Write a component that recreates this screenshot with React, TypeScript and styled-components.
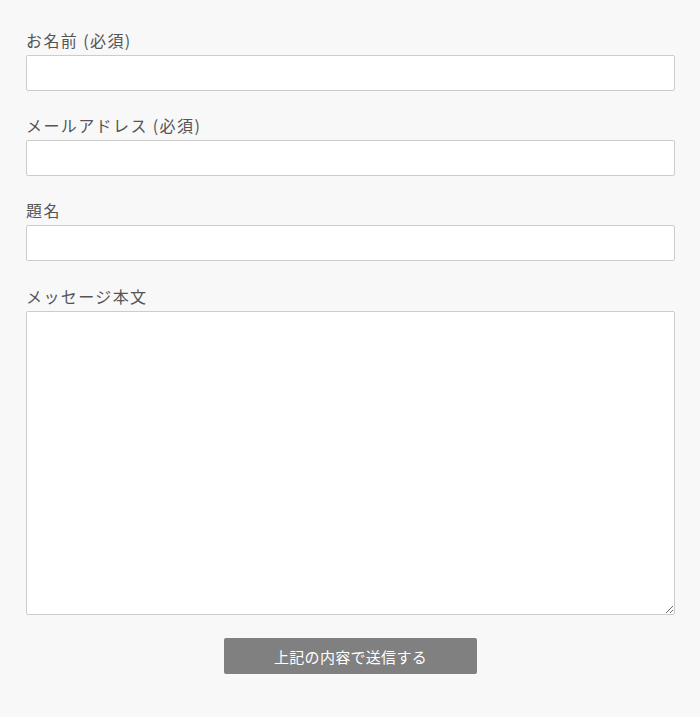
import styled, { createGlobalStyle } from "styled-components";

const GlobalStyle = createGlobalStyle`
  html, body {
    margin: 0;
    padding: 0;
    background: #f8f8f8;
  }
  body {
    font-family: "Noto Sans CJK JP", "Noto Sans", sans-serif;
    color: #555;
  }
`;

function App() {
  return (
    <>
      <GlobalStyle />
      <Form onSubmit={(e) => e.preventDefault()}>
        <Field>
          <Label htmlFor="name">お名前 (必須)</Label>
          <Input id="name" type="text" />
        </Field>
        <Field>
          <Label htmlFor="email">メールアドレス (必須)</Label>
          <Input id="email" type="email" />
        </Field>
        <Field>
          <Label htmlFor="subject">題名</Label>
          <Input id="subject" type="text" />
        </Field>
        <Field $gap={23}>
          <Label htmlFor="message">メッセージ本文</Label>
          <TextArea id="message" />
        </Field>
        <Actions>
          <Submit type="submit">上記の内容で送信する</Submit>
        </Actions>
      </Form>
    </>
  );
}

const Form = styled.form`
  padding: 28px 25px 40px 26px;
  display: flex;
  flex-direction: column;
`;

const Field = styled.div<{ $gap?: number }>`
  display: flex;
  flex-direction: column;
  margin-bottom: 22px;
  margin-top: ${(p) => (p.$gap ? p.$gap - 22 : 0)}px;
`;

const Label = styled.label`
  display: block;
  height: 24px;
  font-size: 16px;
  line-height: 24px;
  letter-spacing: 1.4px;
  margin-bottom: 3px;
  color: #555;
  white-space: nowrap;
`;

const Input = styled.input`
  box-sizing: border-box;
  width: 100%;
  height: 36px;
  border: 1px solid #ccc;
  border-radius: 2px;
  background: #fff;
  padding: 0 8px;
  font: inherit;
  outline: none;
`;

const TextArea = styled.textarea`
  box-sizing: border-box;
  width: 100%;
  height: 304px;
  border: 1px solid #ccc;
  border-radius: 2px;
  background: #fff;
  padding: 8px;
  font: inherit;
  display: block;
  outline: none;
`;

const Actions = styled.div`
  display: flex;
  justify-content: center;
  margin-top: 1px;
`;

const Submit = styled.button`
  width: 253px;
  height: 36px;
  border: none;
  border-radius: 2px;
  background: #808080;
  color: #fff;
  font-family: "Noto Sans CJK JP", "Noto Sans", sans-serif;
  font-size: 15px;
  letter-spacing: 0.3px;
  cursor: pointer;
`;

export default App;
